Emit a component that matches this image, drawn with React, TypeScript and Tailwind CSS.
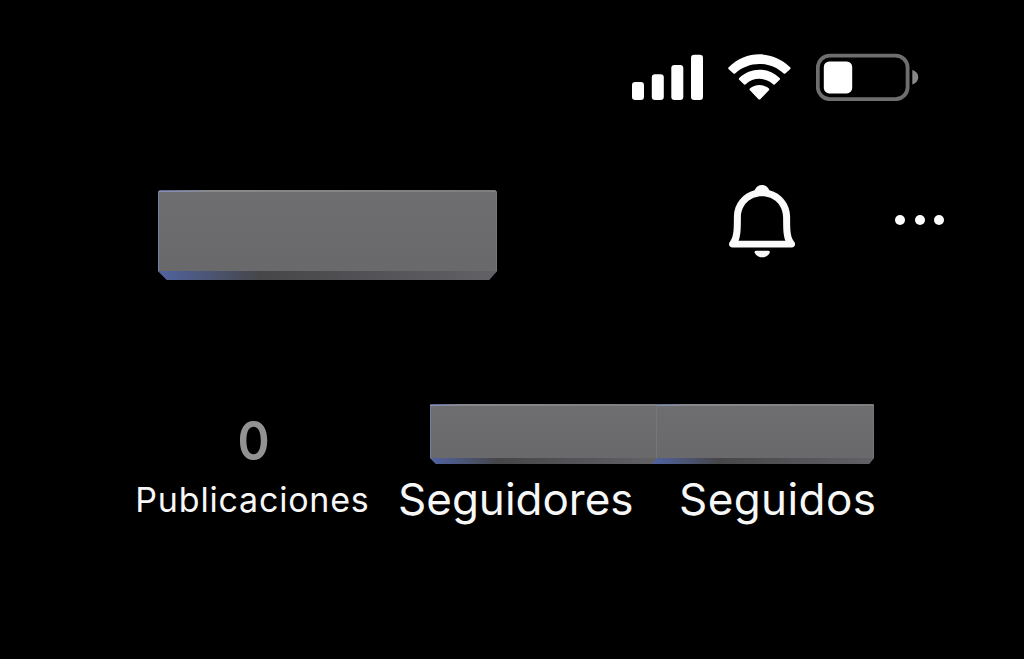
import clsx from 'clsx'

function SignalIcon() {
  return (
    <svg className="h-[46px] w-[72px]" viewBox="0 0 72 46" fill="#fff">
      <rect x="0" y="28" width="12" height="18" rx="3.2" />
      <rect x="19.8" y="20.3" width="12" height="25.7" rx="3.2" />
      <rect x="39.3" y="11" width="12" height="35" rx="3.2" />
      <rect x="59" y="0.7" width="12" height="45.3" rx="3.2" />
    </svg>
  )
}

function WifiIcon() {
  return (
    <svg className="h-[46px] w-[64px]" viewBox="0 0 64 46" fill="#fff">
      <path d="M0.7 13.2 Q-0.3 14.2 0.7 15.2 L5.5 19.6 Q6.3 20.2 7.1 19.4 C20.7 6.7 42.1 6.7 55.7 19.4 Q56.5 20.2 57.3 19.6 L62.1 15.2 Q63.1 14.2 62.1 13.2 C44.7 -4 18.1 -4 0.7 13.2 Z" />
      <path d="M11.2 24 Q10.3 25 11.2 25.8 L16.1 30.4 Q16.9 31 17.7 30.3 C25.5 23 37.3 23 45.1 30.3 Q45.9 31 46.7 30.4 L51.6 25.8 Q52.5 25 51.6 24 C40.1 13 22.7 13 11.2 24 Z" />
      <path d="M21.9 34.6 Q21.1 35.5 21.9 36.3 L30.5 45.2 Q31.4 46 32.3 45.2 L40.9 36.3 Q41.7 35.5 40.9 34.6 C35.7 29.9 27.1 29.9 21.9 34.6 Z" />
    </svg>
  )
}

function BatteryIcon() {
  return (
    <svg className="h-[48px] w-[104px]" viewBox="0 0 104 48">
      <rect x="1.8" y="2.6" width="89.8" height="43.6" rx="12" fill="none" stroke="#6e6e6e" strokeWidth="3.8" />
      <rect x="7.8" y="8.4" width="28.4" height="32" rx="5.5" fill="#fff" />
      <path d="M96.3 17 C104.2 19.2 104.2 29.2 96.3 31.4 Z" fill="#888" />
    </svg>
  )
}

function BellIcon() {
  return (
    <svg className="h-[74px] w-[68px]" viewBox="0 0 68 74" fill="#fafafa">
      <path
        fillRule="evenodd"
        d="M26.6 5.2 C28 1.8 31 0 34 0 C37 0 40 1.8 41.4 5.2 C53.4 8.4 61.8 18.5 62.1 31 C62.3 41 61.6 51 65.8 56.2 C68.4 59.4 66.6 62.4 63.8 62.4 L4.4 62.4 C1.6 62.4 -0.4 59.4 2.2 56.2 C6.4 51 5.7 41 5.9 31 C6.2 18.5 14.6 8.4 26.6 5.2 Z M34 11.2 C22 11.2 13.1 20 12.9 32 C12.8 42 13 49.5 10.6 55.8 L57.4 55.8 C55 49.5 55.2 42 55.1 32 C54.9 20 46 11.2 34 11.2 Z"
      />
      <path d="M28.4 65.8 L40 65.8 Q42 65.8 41.8 67.4 C39.2 74 29.2 74 26.6 67.4 Q26.4 65.8 28.4 65.8 Z" />
    </svg>
  )
}

/** Slab covering a value: flat face with a shaded bevel along the lower edge */
function Slab({ className, bevel }: { className: string; bevel: string }) {
  return (
    <div className={clsx('flex flex-col bg-[#6b6b6d]', className)}>
      <div className="h-px bg-linear-to-r from-[#5c6893] via-[#8b8b8f] via-15% to-[#7c7c7f]" />
      <div className="h-px bg-linear-to-r from-[#8590bb] via-[#88888b] via-15% to-[#808083]" />
      <div className="flex-1 border-r border-l border-r-[#77777b] border-l-[#7280a9] bg-linear-to-b from-[#6e6e70] to-[#69696b]" />
      <div
        className={clsx(
          'bg-linear-to-r from-[#50619b] from-2% via-[#464649] via-30% to-[#626266]',
          bevel,
        )}
      />
    </div>
  )
}

export default function App() {
  return (
    <div className="flex h-[659px] w-[1024px] flex-col overflow-hidden bg-black font-['Inter',sans-serif] text-[#f7f7f7]">
      <div className="flex h-[102px] items-end justify-end pr-[104px] pb-px">
        <div className="mr-6 flex gap-6 pb-px">
          <SignalIcon />
          <WifiIcon />
        </div>
        <BatteryIcon />
      </div>

      <div className="flex h-[302px] items-start pt-[83px] pl-[158px]">
        <Slab
          className="mt-[5px] h-[90px] w-[339px] [clip-path:polygon(0_2px,2px_0,calc(100%-2px)_0,100%_2px,100%_calc(100%-9px),calc(100%-8px)_100%,9px_100%,0_calc(100%-9px))]"
          bevel="h-[9px]"
        />
        <div className="ml-[231px]">
          <BellIcon />
        </div>
        <div className="mt-[30px] ml-[99.3px] flex gap-[9.6px]">
          {[0, 1, 2].map((i) => (
            <span key={i} className="size-2.5 rounded-full bg-white" />
          ))}
        </div>
      </div>

      <div className="flex pl-[136px]">
        <div className="flex w-[234px] flex-col items-center pt-[7px]">
          <span className="text-[53px] leading-[60px] font-semibold text-[#929292]">
            <span className="inline-block scale-x-[0.92]">0</span>
          </span>
          <span className="mt-[5px] -ml-px text-[34px] leading-[48px] tracking-[0.8px] whitespace-nowrap">Publicaciones</span>
        </div>
        <div className="ml-[28px]">
          <div className="flex pl-8">
            <Slab
              className="h-[60px] w-[227px] [clip-path:polygon(0_1px,1px_0,100%_0,100%_calc(100%-6px),calc(100%-5px)_100%,6px_100%,0_calc(100%-6px))]"
              bevel="h-1.5"
            />
            <Slab
              className="-ml-[5px] h-[60px] w-[222px] [clip-path:polygon(5px_0,calc(100%-1px)_0,100%_1px,100%_calc(100%-6px),calc(100%-5px)_100%,0_100%,5px_calc(100%-6px))]"
              bevel="h-1.5"
            />
          </div>
          <div className="mt-2 flex text-[44px] leading-[54px]">
            <span className="w-[281px]">Seguidores</span>
            <span className="tracking-[0.4px]">Seguidos</span>
          </div>
        </div>
      </div>
    </div>
  )
}
